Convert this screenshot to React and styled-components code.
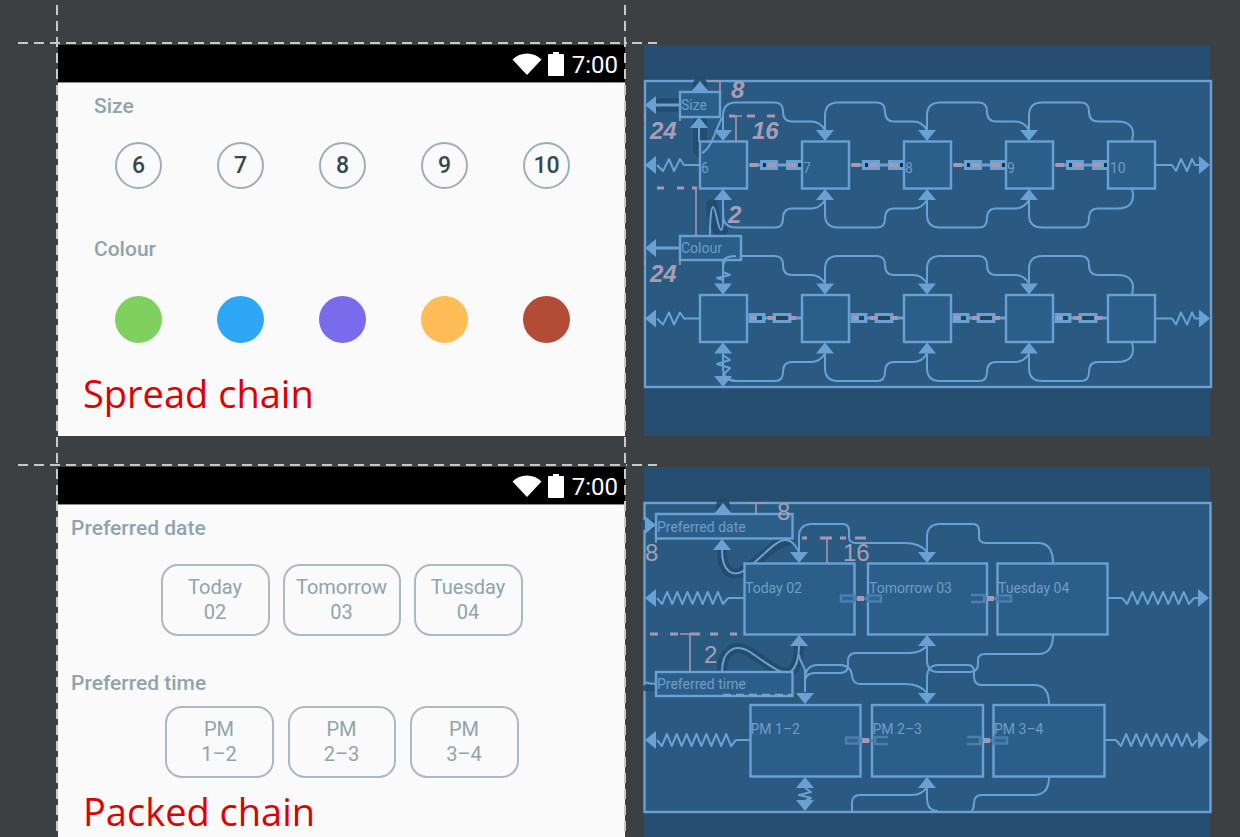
import React from "react";
import styled, { createGlobalStyle } from "styled-components";

const Global = createGlobalStyle`
  html, body { margin: 0; padding: 0; background: #3c4043; }
  #root { width: 1240px; height: 837px; }
`;

const LINE = "#6aa1d4";

const Page = styled.div`
  position: relative;
  width: 1240px;
  height: 837px;
  overflow: hidden;
  background: #3c4043;
  box-sizing: border-box;
  padding: 45px 0 0 58px;
  display: grid;
  grid-template-columns: 567px 566px;
  grid-auto-rows: 391px;
  column-gap: 19px;
  row-gap: 31px;
  font-family: Roboto, "Liberation Sans", sans-serif;
`;

const Guide = styled.div`
  position: absolute;
  ${(p) =>
    p.$vertical
      ? `left:${p.$at}px; top:5px; width:2px; height:832px;
         background: repeating-linear-gradient(180deg, #c9c9c9 0 10px, transparent 10px 16px);`
      : `top:${p.$at}px; left:${p.$from}px; width:${p.$len}px; height:2px;
         background: repeating-linear-gradient(90deg, #c9c9c9 0 10px, transparent 10px 16px);`}
`;

const Phone = styled.section`
  display: flex;
  flex-direction: column;
  background: #fafafa;
  height: 391px;
`;

const StatusBar = styled.div`
  flex: none;
  box-sizing: content-box;
  height: 36px;
  background: #000;
  border-bottom: 1px solid #8c8c8c;
  display: flex;
  align-items: center;
  justify-content: flex-end;
  padding-right: 7px;
  padding-top: 1px;
  gap: 6px;
  color: #fff;
`;

const Clock = styled.span`
  font-size: 24px;
  font-weight: 400;
  margin: 2px 0 0 2px;
  line-height: 36px;
`;

const Content = styled.div`
  flex: 1;
  position: relative;
  display: flex;
  flex-direction: column;
  min-height: 0;
`;

const FieldLabel = styled.div`
  font-size: 21px;
  font-weight: 500;
  color: #90a4ae;
  line-height: 24px;
  margin: ${(p) => p.$margin};
`;

const Spread = styled.div`
  display: flex;
  justify-content: space-evenly;
  padding-left: 2px;
  margin-top: ${(p) => p.$top}px;
`;

const Size = styled.div`
  box-sizing: border-box;
  width: 47px;
  height: 47px;
  border: 2px solid #9cafb9;
  border-radius: 50%;
  display: flex;
  align-items: center;
  justify-content: center;
  font-size: 23px;
  font-weight: 500;
  color: #37474f;
`;

const Swatch = styled.div`
  width: 47px;
  height: 47px;
  border-radius: 50%;
  background: ${(p) => p.$color};
`;

const Caption = styled.div`
  font-family: "Open Sans", "Noto Sans", sans-serif;
  font-size: 38px;
  line-height: 44px;
  color: #df0000;
  margin: ${(p) => p.$margin};
`;

const Packed = styled.div`
  display: flex;
  justify-content: center;
  gap: ${(p) => p.$gap}px;
  margin-top: ${(p) => p.$top}px;
`;

const Pill = styled.div`
  box-sizing: border-box;
  width: ${(p) => p.$width}px;
  height: 72px;
  border: 2px solid #a9bac3;
  border-radius: 17px;
  display: flex;
  flex-direction: column;
  align-items: center;
  justify-content: center;
  font-size: 20px;
  line-height: 25px;
  color: #90a4ae;
  background: #fafafa;
`;

const Blueprint = styled.section`
  background: #254e70;
  height: 391px;
  min-width: 0;
`;

const Canvas = styled.svg`
  display: block;
  width: 566px;
  height: 391px;
  overflow: visible;
`;

const Frame = styled.rect`
  fill: #2a5a81;
  stroke: ${LINE};
  stroke-width: 2.4;
`;

const Node = styled.rect`
  fill: #2b5f89;
  stroke: ${LINE};
  stroke-width: 2.4;
`;

const Wire = styled.path`
  fill: none;
  stroke: ${LINE};
  stroke-width: 2;
  stroke-linejoin: round;
`;

const ThickWire = styled(Wire)`
  stroke-width: 3;
`;

const DimWire = styled(Wire)`
  stroke: #4a7fae;
  stroke-width: 3;
`;

const DashedEdge = styled(Wire)`
  stroke: #7ba3c9;
  stroke-width: 2.4;
  stroke-dasharray: 8 5;
`;

const Halo = styled.path`
  fill: none;
  stroke: #234a6b;
  stroke-width: ${(p) => p.$w || 10}px;
  stroke-linecap: round;
  opacity: 0.9;
`;

const Head = styled.polygon`
  fill: ${LINE};
`;

const Margin = styled.path`
  fill: none;
  stroke: #a598b0;
  stroke-width: ${(p) => p.$w || 1.6}px;
`;

const Dashes = styled.path`
  fill: none;
  stroke: #a598b0;
  stroke-width: 3px;
`;

const ChainLink = styled.rect`
  fill: ${(p) => (p.$dim ? "#2f6896" : LINE)};
  stroke: ${(p) => (p.$dim ? "#4a7fae" : LINE)};
  stroke-width: ${(p) => (p.$dim ? 2.4 : 1)};
`;

const Bracket = styled.path`
  fill: none;
  stroke: #4a7fae;
  stroke-width: 2.6;
`;

const ChainBar = styled.rect`
  fill: ${(p) => p.$fill};
`;

const WidgetText = styled.text`
  font-family: Roboto, "Liberation Sans", sans-serif;
  font-size: 14px;
  fill: #6f9dc6;
`;

const Metric = styled.text`
  font-family: "Liberation Sans", Roboto, sans-serif;
  font-size: 24px;
  font-weight: ${(p) => (p.$bold ? 700 : 400)};
  font-style: ${(p) => (p.$bold ? "italic" : "normal")};
  fill: #a99db5;
`;

const arrow = (x, y, dir, key) => {
  const w = 9;
  const l = 11;
  let pts;
  if (dir === "up") pts = `${x},${y} ${x - w},${y + l} ${x + w},${y + l}`;
  if (dir === "down") pts = `${x},${y} ${x - w},${y - l} ${x + w},${y - l}`;
  if (dir === "left") pts = `${x},${y} ${x + l},${y - w} ${x + l},${y + w}`;
  if (dir === "right") pts = `${x},${y} ${x - l},${y - w} ${x - l},${y + w}`;
  return <Head key={key} points={pts} />;
};

const zig = (x0, x1, y, peaks, amp = 6) => {
  const step = (x1 - x0) / (peaks * 2);
  let d = `M${x0} ${y}`;
  for (let i = 1; i <= peaks * 2; i++) {
    const dy = i === peaks * 2 ? 0 : i % 2 ? amp : -amp;
    d += ` L${x0 + step * i} ${y + dy}`;
  }
  return d;
};

/* one spread-chain connector; cy = row centre, s = -1 top / +1 bottom */
const spreadPath = (x, cy, s, end) => {
  const far = cy + s * 62.5;
  const mid = cy + s * 43.5;
  const base = cy + s * 35;
  const tail = end
    ? `H${x + 88} Q${x + 108} ${mid} ${x + 103} ${cy + s * 24}`
    : `H${x + 88} Q${x + 97} ${mid} ${x + 102} ${base}`;
  return `M${x} ${base} V${far - s * 13} Q${x} ${far} ${x + 13} ${far} H${x + 52} Q${x + 60} ${far} ${x + 60} ${
    far - s * 9
  } Q${x + 60} ${mid} ${x + 69} ${mid} ${tail}`;
};

const BOX_X = [700, 802, 904, 1006, 1108];
const ARROW_X = [723, 825, 927, 1029];

const SpreadRow = ({ cy, labels }) => (
  <>
    {ARROW_X.map((x, i) => (
      <React.Fragment key={x}>
        <Wire d={spreadPath(x, cy, -1, i === 3)} />
        <Wire d={spreadPath(x, cy, 1, i === 3)} />
        {arrow(x, cy - 24, "down", "t")}
        {arrow(x, cy + 24, "up", "b")}
      </React.Fragment>
    ))}
    {BOX_X.map((x, i) => (
      <React.Fragment key={x}>
        <Node x={x} y={cy - 23.5} width={47} height={47} />
        {labels && <WidgetText x={x + (i === 4 ? 2 : 1)} y={cy + 8}>{labels[i]}</WidgetText>}
      </React.Fragment>
    ))}
    <Wire d={`M700 ${cy} H684 L680 ${cy - 6} L674 ${cy + 6} L669 ${cy - 6} L663 ${cy + 6} L657 ${cy}`} />
    {arrow(645, cy, "left", "sl")}
    <Wire d={`M1156 ${cy} H1172 L1176 ${cy + 6} L1181 ${cy - 6} L1187 ${cy + 6} L1192 ${cy - 6} L1195 ${cy} H1199`} />
    {arrow(1210, cy, "right", "sr")}
  </>
);

const ChainTop = ({ x, cy }) => (
  <>
    <ThickWire d={`M${x} ${cy} H${x + 54}`} />
    <ChainLink x={x + 11.5} y={cy - 4.5} width={17} height={9} />
    <ChainLink x={x + 37.5} y={cy - 4.5} width={16} height={9} />
    <ChainBar x={x + 1} y={cy - 2} width={8} height={4} $fill="#a598b0" />
    <ChainBar x={x + 14} y={cy - 2} width={3} height={4} $fill="#17304a" />
    <ChainBar x={x + 19} y={cy - 2} width={8} height={4} $fill="#a598b0" />
    <ChainBar x={x + 38} y={cy - 2} width={9} height={4} $fill="#a598b0" />
    <ChainBar x={x + 49} y={cy - 2} width={3} height={4} $fill="#17304a" />
  </>
);

const ChainLow = ({ x, cy }) => (
  <>
    <ThickWire d={`M${x} ${cy} H${x + 54}`} />
    <ChainLink x={x} y={cy - 4.5} width={16} height={9} />
    <ChainLink x={x + 24} y={cy - 4.5} width={18} height={9} />
    <ChainBar x={x + 2} y={cy - 2} width={5} height={4} $fill="#a598b0" />
    <ChainBar x={x + 8} y={cy - 2} width={5} height={4} $fill="#1f4565" />
    <ChainBar x={x + 19} y={cy - 2} width={8} height={4} $fill="#a598b0" />
    <ChainBar x={x + 27} y={cy - 2} width={12} height={4} $fill="#1f4565" />
    <ChainBar x={x + 40} y={cy - 2} width={7} height={4} $fill="#a598b0" />
  </>
);

const SpreadBlueprint = () => (
  <Canvas viewBox="644 45 566 391">
    <Frame x={645} y={81} width={566} height={306} />
    <Halo d="M660 105 H680" $w={14} />
    <Halo d="M700 84 V90" $w={14} />
    <Halo d="M700 120 V150" $w={14} />
    <Halo d="M712 205 C714 222 716 230 722 230" $w={12} />
    <SpreadRow cy={165} labels={["6", "7", "8", "9", "10"]} />
    <SpreadRow cy={318.5} />
    {[749, 851, 953, 1055].map((x) => (
      <React.Fragment key={x}>
        <ChainTop x={x} cy={165} />
        <ChainLow x={x} cy={318} />
      </React.Fragment>
    ))}
    <Wire d="M702 153 C712 148 716 128 722 118" />
    <Wire d="M710 236 C710 220 711 207 713 207 C716 207 718 230 721 230 C724 230 723 210 723 200" />

    {/* Size */}
    <Node x={680} y={92} width={40} height={25} />
    <WidgetText x={681} y={110}>Size</WidgetText>
    {arrow(700, 81, "up", "a1")}
    {arrow(699, 117, "up", "a2")}
    <Wire d="M699 128 V142" />
    <ThickWire d="M656 105 H680" />
    {arrow(645, 105, "left", "a3")}
    <Margin d="M708 81 H720 V92 M680 117 V121 M645 113 V121" />
    <Dashes d="M729 116 H735 M747 116 H755 M767 116 H775" />
    <Margin d="M732 116 H742 M736 116 V142" />
    <Dashes d="M657 188 H664 M677 188 H684 M692 188 H697" />
    <Margin d="M696 188 V236" />
    <Metric $bold x={731} y={98}>8</Metric>
    <Metric $bold x={650} y={139}>24</Metric>
    <Metric $bold x={752} y={139}>16</Metric>
    <Metric $bold x={728} y={223}>2</Metric>

    {/* Colour */}
    <Node x={680} y={236} width={61} height={24} />
    <WidgetText x={681} y={253}>Colour</WidgetText>
    <ThickWire d="M656 248 H680" />
    {arrow(645, 248, "left", "a4")}
    <Margin d="M680 260 V265 M645 260 V265" />
    <Metric $bold x={650} y={282}>24</Metric>
    <Wire d="M723 283 L723 280 L717 278 L730 275 L723 272 V263 Q723 256 736 256" />
    {/* bottom strut */}
    <Wire d="M723 355 L730 360 L717 364 L730 368 L723 375 Q730 381 738 381" />
    {arrow(723, 387, "down", "a5")}
  </Canvas>
);

const Zigzag = ({ from, to, y, peaks }) => <Wire d={zig(from, to, y, peaks)} />;

const PackChain = ({ x, y, pink, open }) => (
  <>
    {open === "left" ? (
      <Bracket d={`M${x} ${y - 3.5} H${x + 13} V${y + 3.5} H${x}`} />
    ) : (
      <ChainLink $dim x={x} y={y - 3} width={13} height={6} />
    )}
    {open === "right" ? (
      <Bracket d={`M${x + 42} ${y - 3.5} H${x + 29} V${y + 3.5} H${x + 42}`} />
    ) : (
      <ChainLink $dim x={x + 27} y={y - 3} width={13} height={6} />
    )}
    <DimWire d={`M${x + 13} ${y} H${x + 28}`} />
    <ChainBar x={pink} y={y - 2.5} width={7} height={5} $fill="#a598b0" />
  </>
);

const PackedBlueprint = () => (
  <Canvas viewBox="644 467 566 391">
    <Frame x={644.5} y={503} width={566} height={309} />
    <Halo d="M723 505 V512" $w={14} />
    <Halo d="M722 552 C722 572 733 578 745 570 C760 560 775 542 788 541" $w={10} />
    <Halo d="M722 672 C722 650 735 643 750 652 C765 662 780 675 790 672 C797 668 799 655 799 648" $w={10} />
    <Halo d="M645 525 H656" $w={10} />
    <Halo d="M645 688 H656" $w={6} />

    {/* connectors upper row */}
    <Wire d="M722 550 C722 572 733 578 745 570 C760 560 775 540 785 540 C792 540 795 545 799 552" />
    <Wire d="M799 552 V537 Q799 524 812 524 H843 Q849 524 849 531 V537 Q849 543 856 543 H905 Q920 543 927 552" />
    <Wire d="M927 552 V537 Q927 524 940 524 H973 Q979 524 979 531 V537 Q979 543 986 543 H1038 Q1053 543 1053 563" />
    {/* lower side of upper row / upper side of lower row */}
    <Wire d="M722 672 C722 650 735 643 750 652 C765 662 780 675 790 672 C797 668 799 655 799 646" />
    <Wire d="M799 655 C800 662 803 664 805 670 V692" />
    <Wire d="M805 680 Q805 665 818 665 H840 Q851 665 852 676 Q853 684 860 684 H905 Q920 684 927 693" />
    <Wire d="M805 682 Q805 673 815 673 H840 Q848 673 848 665 V661 Q848 653 856 653 H910 Q920 653 927 646" />
    <Wire d="M927 646 V660 Q927 672 938 672 H970 Q978 672 978 664 V660 Q978 654 985 654 H1038 Q1053 654 1053 635" />
    <Wire d="M927 693 V678 Q927 665 938 665 H968 Q974 665 974 672 V677 Q974 685 982 685 H1034 Q1049 685 1049 704" />
    <Wire d="M852 811 V803 Q852 795 860 795 H912 Q922 795 927 787" />
    <Wire d="M927 787 V798 Q927 811 938 811" />
    <Wire d="M972 811 Q974 808 974 803 Q974 795 982 795 H1034 Q1049 795 1049 777" />
    <Wire d="M805 704 V711" />

    {/* widgets */}
    <Node x={744.5} y={563.5} width={110} height={71} />
    <Node x={868} y={563.5} width={119} height={71} />
    <Node x={997.5} y={563.5} width={110} height={71} />
    <Node x={750.5} y={705} width={110} height={71.5} />
    <Node x={872} y={705} width={111} height={71.5} />
    <Node x={993.5} y={705} width={111} height={71.5} />

    <WidgetText x={745} y={593}>Today 02</WidgetText>
    <WidgetText x={869} y={593}>Tomorrow 03</WidgetText>
    <WidgetText x={998} y={593}>Tuesday 04</WidgetText>
    <WidgetText x={750.5} y={734}>PM 1–2</WidgetText>
    <WidgetText x={872.5} y={734}>PM 2–3</WidgetText>
    <WidgetText x={994} y={734}>PM 3–4</WidgetText>

    {/* springs */}
    <Wire d="M744 598 H728" />
    <Zigzag from={657} to={728} y={598} peaks={7} />
    {arrow(645, 598, "left", "s1")}
    <Wire d="M1108 598 H1122" />
    <Zigzag from={1122} to={1194} y={598} peaks={7} />
    <Wire d="M1194 598 H1198" />
    {arrow(1209, 598, "right", "s2")}
    <Wire d="M750 740 H736" />
    <Zigzag from={657} to={736} y={740} peaks={8} />
    {arrow(645, 740, "left", "s3")}
    <Wire d="M1105 740 H1116" />
    <Zigzag from={1116} to={1197} y={740} peaks={8} />
    {arrow(1209, 740, "right", "s4")}

    {/* packed chains */}
    <PackChain x={841} y={598.5} pink={857} />
    <PackChain x={971} y={598.5} pink={987} open="left" />
    <PackChain x={846} y={740.5} pink={862} open="right" />
    <PackChain x={967} y={740.5} pink={983} open="left" />

    {/* arrows on widgets */}
    {arrow(799, 563, "down", "w1")}
    {arrow(927, 563, "down", "w2")}
    {arrow(799, 635, "up", "w3")}
    {arrow(927, 635, "up", "w4")}
    {arrow(805, 704, "down", "w5")}
    {arrow(927, 704, "down", "w6")}
    {arrow(805, 777, "up", "w7")}
    {arrow(927, 777, "up", "w8")}
    {arrow(805, 811, "down", "w9")}
    <Wire d="M805 788 L811 792 L799 795 L811 798 L805 801" />

    {/* labels */}
    <Node x={656} y={514} width={136.5} height={24.5} />
    <WidgetText x={657} y={532}>Preferred date</WidgetText>
    {arrow(723, 503, "up", "l1")}
    {arrow(722, 539, "up", "l2")}
    {arrow(656, 525, "right", "l3")}
    <Node x={656} y={672} width={136.5} height={24} />
    <WidgetText x={657} y={689}>Preferred time</WidgetText>
    <DashedEdge d="M723 695 H792" />
    <Wire d="M644 682 Q650 684 656 684" />

    {/* margins */}
    <Margin d="M746 503 H767 M756 503 V514 M656 539 V543" />
    <Dashes d="M802 538 H807 M820 538 H832 M840 538 H846 M855 538 H866" />
    <Margin d="M827 538 V563" />
    <Dashes d="M650 634 H658 M670 634 H678 M690 634 H700 M710 634 H718 M730 634 H737" />
    <Margin d="M680 634 H700 M690 634 V672" />
    <Metric x={645} y={561}>8</Metric>
    <Metric x={777} y={520}>8</Metric>
    <Metric x={843} y={561}>16</Metric>
    <Metric x={704} y={663}>2</Metric>
  </Canvas>
);

const StatusIcons = () => (
  <>
    <svg width="30" height="22" viewBox="0 0 30 22">
      <path d="M0.5 6.5 C8 -1.5 22 -1.5 29.5 6.5 L15 22 Z" fill="#fff" />
    </svg>
    <svg width="16" height="24" viewBox="0 0 16 24">
      <path d="M5 0 H11 V2 H15 Q16 2 16 3 V23 Q16 24 15 24 H1 Q0 24 0 23 V3 Q0 2 1 2 H5 Z" fill="#fff" />
    </svg>
    <Clock>7:00</Clock>
  </>
);

const SIZES = ["6", "7", "8", "9", "10"];
const COLOURS = ["#7ed05f", "#2ea8f6", "#7a6bec", "#ffbc57", "#b34c36"];
const DATES = [
  ["Today", "02", 109],
  ["Tomorrow", "03", 118],
  ["Tuesday", "04", 109],
];
const TIMES = [
  ["PM", "1–2", 109],
  ["PM", "2–3", 108],
  ["PM", "3–4", 109],
];

export default function App() {
  return (
    <Page>
      <Global />
      <Phone>
        <StatusBar>
          <StatusIcons />
        </StatusBar>
        <Content>
          <FieldLabel $margin="11px 0 0 36px">Size</FieldLabel>
          <Spread $top={24}>
            {SIZES.map((s) => (
              <Size key={s}>{s}</Size>
            ))}
          </Spread>
          <FieldLabel $margin="48px 0 0 36px">Colour</FieldLabel>
          <Spread $top={35}>
            {COLOURS.map((c) => (
              <Swatch key={c} $color={c} />
            ))}
          </Spread>
          <Caption $margin="28px 0 0 25px">Spread chain</Caption>
        </Content>
      </Phone>
      <Blueprint>
        <SpreadBlueprint />
      </Blueprint>
      <Phone>
        <StatusBar>
          <StatusIcons />
        </StatusBar>
        <Content>
          <FieldLabel $margin="11px 0 0 13px">Preferred date</FieldLabel>
          <Packed $top={24} $gap={13}>
            {DATES.map(([a, b, w]) => (
              <Pill key={a} $width={w}>
                <span>{a}</span>
                <span>{b}</span>
              </Pill>
            ))}
          </Packed>
          <FieldLabel $margin="35px 0 0 13px">Preferred time</FieldLabel>
          <Packed $top={11} $gap={14}>
            {TIMES.map(([a, b, w]) => (
              <Pill key={b} $width={w}>
                <span>{a}</span>
                <span>{b}</span>
              </Pill>
            ))}
          </Packed>
          <Caption $margin="11px 0 0 25px">Packed chain</Caption>
        </Content>
      </Phone>
      <Blueprint>
        <PackedBlueprint />
      </Blueprint>
      <Guide $vertical $at={56} />
      <Guide $vertical $at={624} />
      <Guide $at={42} $from={18} $len={609} />
      <Guide $at={42} $from={632} $len={25} />
      <Guide $at={464} $from={18} $len={609} />
      <Guide $at={464} $from={632} $len={25} />
    </Page>
  );
}
